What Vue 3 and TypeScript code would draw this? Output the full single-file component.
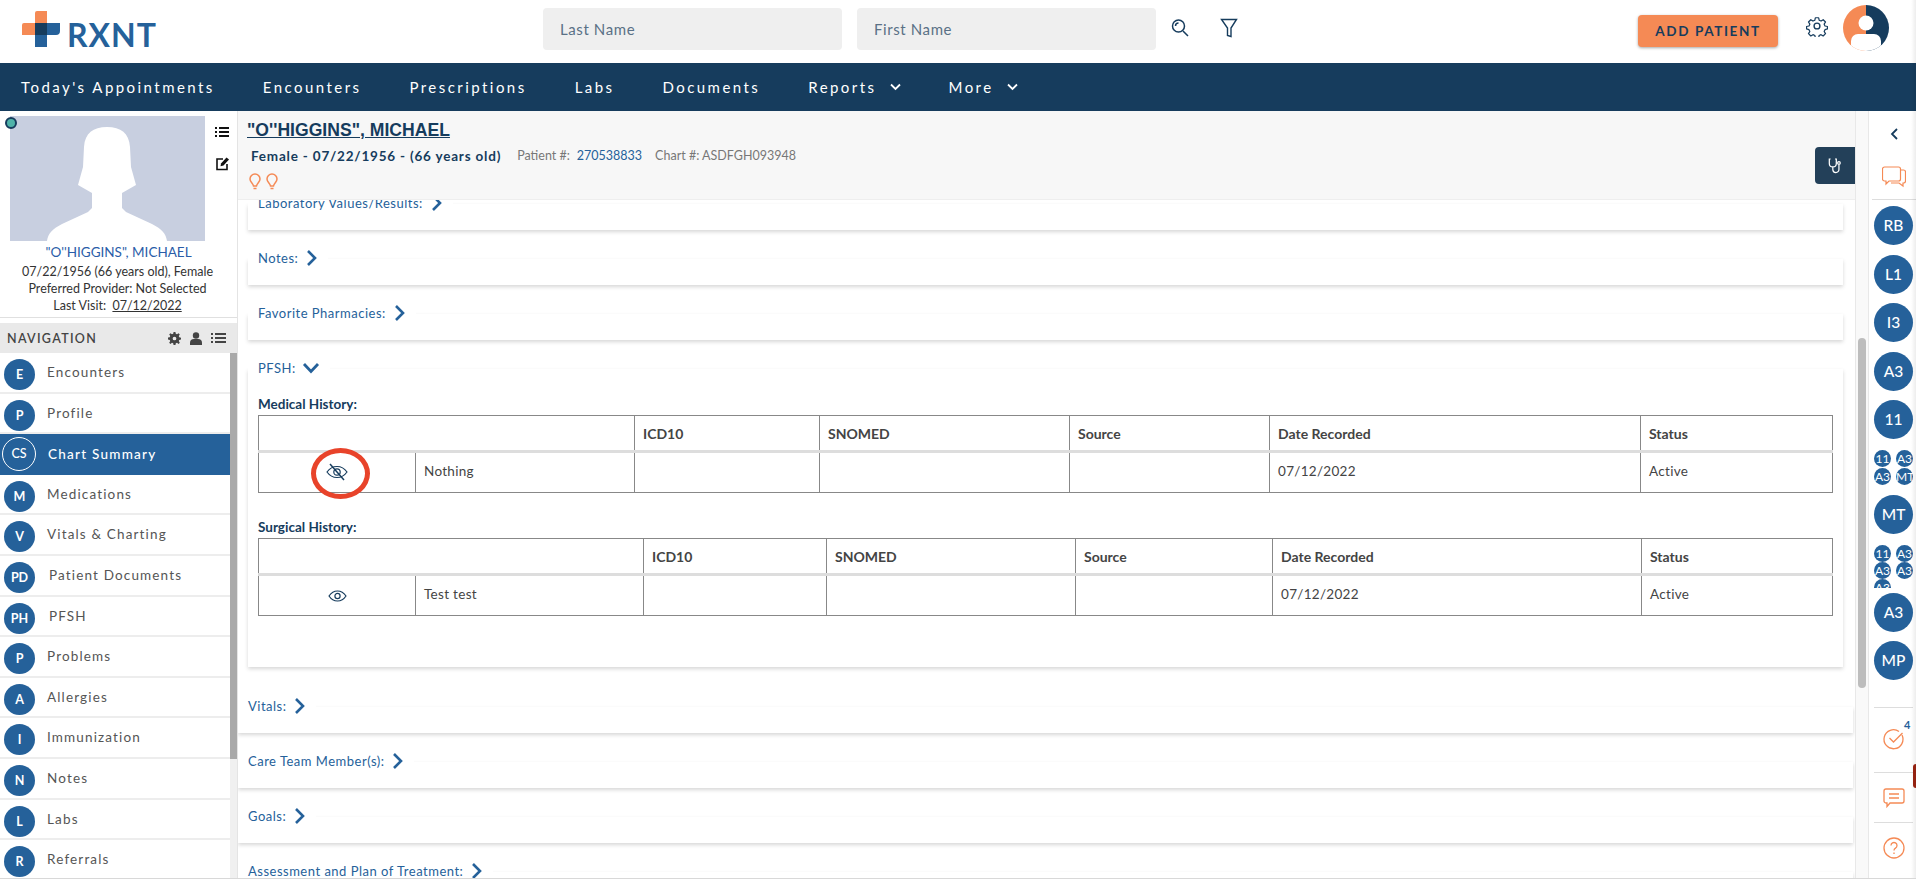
<script setup lang="ts">
const topLinks = [
  { label: "Today's Appointments" },
  { label: "Encounters" },
  { label: "Prescriptions" },
  { label: "Labs" },
  { label: "Documents" },
  { label: "Reports", menu: true },
  { label: "More", menu: true },
];

const navItems = [
  { badge: "E", label: "Encounters" },
  { badge: "P", label: "Profile" },
  { badge: "CS", label: "Chart Summary", active: true },
  { badge: "M", label: "Medications" },
  { badge: "V", label: "Vitals & Charting" },
  { badge: "PD", label: "Patient Documents" },
  { badge: "PH", label: "PFSH" },
  { badge: "P", label: "Problems" },
  { badge: "A", label: "Allergies" },
  { badge: "I", label: "Immunization" },
  { badge: "N", label: "Notes" },
  { badge: "L", label: "Labs" },
  { badge: "R", label: "Referrals" },
];

const headers = ["ICD10", "SNOMED", "Source", "Date Recorded", "Status"];

const histories = [
  {
    title: "Medical History:",
    cols: [157, 219, 185, 250, 200, 371, 192],
    name: "Nothing",
    hidden: true,
  },
  {
    title: "Surgical History:",
    cols: [157, 228, 183, 249, 197, 369, 191],
    name: "Test test",
    hidden: false,
  },
];

const lowerCards = ["Vitals:", "Care Team Member(s):", "Goals:", "Assessment and Plan of Treatment:"];
const clusterA = ["11", "A3", "A3", "MT"];
const clusterB = ["11", "A3", "A3", "A3", "A3"];
</script>

<template>
  <div class="page">
    <header class="topbar">
      <div class="logo">
        <svg class="logo-mark" width="38" height="36" viewBox="0 0 38 36">
          <path d="M13 2a2 2 0 0 1 2-2h10v12h-12zM0 14a2 2 0 0 1 2-2h11v12H0z" fill="#f58a55" />
          <path d="M25 12h13v8a4 4 0 0 1-4 4h-9v12H13V24h12z" fill="#25619a" />
          <rect x="13" y="12" width="12" height="12" fill="#163c5d" />
        </svg>
        <span class="logo-text">RXNT</span>
      </div>
      <div class="search">
        <div class="search-box">Last Name</div>
        <div class="search-box">First Name</div>
        <svg class="search-icon" width="20" height="20" viewBox="0 0 20 20" fill="none" stroke="#163c5d" stroke-width="1.5">
          <circle cx="8.500" cy="8" r="6" />
          <path d="M13 13l5 5M5.500 8a3 3 0 0 1 3-3" />
        </svg>
        <svg class="filter-icon" width="18" height="20" viewBox="0 0 18 20" fill="none" stroke="#163c5d" stroke-width="1.400">
          <path d="M1.500 1.500h15L11 10v8.500l-3.500-1V10z" />
        </svg>
      </div>
      <div class="top-right">
        <button class="add-btn">ADD PATIENT</button>
        <svg class="gear" width="22" height="22" viewBox="0 0 24 24" fill="none" stroke="#163c5d" stroke-width="1.500" stroke-linejoin="round">
          <circle cx="12" cy="12" r="3.200" />
          <path d="M10 2h4l.6 3 2.300 1 2.600-1.600 2.800 2.800-1.600 2.600 1 2.200 3 .6v3l-3 .8-1 2.300 1.600 2.600-2.800 2.800-2.600-1.600-2.300 1-.6 3h-4l-.6-3-2.300-1-2.600 1.600-2.800-2.800 1.600-2.600-1-2.300-3-.8v-3l3-.6 1-2.200-1.600-2.600 2.800-2.800 2.600 1.600 2.300-1z" transform="translate(1.200 1.200) scale(.9)" />
        </svg>
        <svg class="me" width="46" height="46" viewBox="0 0 46 46">
          <clipPath id="me-clip"><circle cx="23" cy="23" r="23" /></clipPath>
          <g clip-path="url(#me-clip)">
            <rect width="23" height="46" fill="#f58a55" />
            <rect x="23" width="23" height="46" fill="#163c5d" />
            <circle cx="23" cy="18" r="7.500" fill="#fff" />
            <path d="M8 46V36a7 7 0 0 1 7-7h16a7 7 0 0 1 7 7v10z" fill="#fff" />
          </g>
        </svg>
      </div>
    </header>

    <nav class="mainnav">
      <a v-for="link in topLinks" :key="link.label" class="mainnav-link">
        {{ link.label }}
        <svg v-if="link.menu" width="11" height="8" viewBox="0 0 11 8" fill="none" stroke="#fff" stroke-width="1.800">
          <path d="M1 1.500l4.500 4.500L10 1.500" />
        </svg>
      </a>
    </nav>

    <div class="body">
      <aside class="sidebar">
        <section class="profile">
          <div class="profile-top">
            <span class="status-dot"></span>
            <svg class="photo" width="195" height="125" viewBox="0 0 195 125">
              <rect width="195" height="125" fill="#c8cfe0" />
              <path d="M97 11c-14 0-22 6-23 20l-1 20-5 18 14 8v15l-4 4-26 12c-10 5-14 10-15 17h120c-1-7-5-12-15-17l-26-12-4-4V77l14-8-5-18-1-20c-1-14-9-20-23-20z" fill="#fff" />
            </svg>
            <div class="profile-tools">
              <svg width="14" height="14" viewBox="0 0 14 14" fill="#111">
                <path d="M0 2h2v2H0zM4 2h10v2H4zM0 6h2v2H0zM4 6h10v2H4zM0 10h2v2H0zM4 10h10v2H4z" />
              </svg>
              <svg width="15" height="15" viewBox="0 0 15 15" fill="none" stroke="#111" stroke-width="1.600">
                <path d="M8 3H2v10.500h10V8" />
                <path d="M6 7.500l5.500-6 2.500 2-5.500 6-3 .8z" fill="#111" stroke="none" />
              </svg>
            </div>
          </div>
          <div class="profile-name">"O''HIGGINS", MICHAEL</div>
          <div class="profile-line">07/22/1956 (66 years old), Female</div>
          <div class="profile-line">Preferred Provider: Not Selected</div>
          <div class="profile-line">Last Visit:&nbsp; <u>07/12/2022</u></div>
        </section>

        <div class="nav-head">
          <span>NAVIGATION</span>
          <div class="nav-head-icons">
            <svg width="13" height="13" viewBox="0 0 14 14" fill="#444">
              <path fill-rule="evenodd" d="M6 0h2l.4 2 1.300.5L11.400 1.400l1.300 1.300-1.100 1.700.5 1.300 2 .4v2l-2 .4-.5 1.300 1.100 1.700-1.300 1.300-1.700-1.100-1.300.5-.4 2H6l-.4-2-1.300-.5-1.700 1.100-1.300-1.300 1.100-1.700-.5-1.300-2-.4V6l2-.4.5-1.300-1.100-1.700 1.300-1.300 1.700 1.100 1.300-.5zM7 5a2 2 0 1 0 0 4 2 2 0 0 0 0-4z" />
            </svg>
            <svg width="12" height="13" viewBox="0 0 12 13" fill="#444">
              <circle cx="6" cy="3.500" r="3.200" />
              <path d="M0 13v-2a4 4 0 0 1 4-4h4a4 4 0 0 1 4 4v2z" />
            </svg>
            <svg width="15" height="12" viewBox="0 0 15 12" fill="#444">
              <path d="M0 1h2v2H0zM4 1h11v2H4zM0 5h2v2H0zM4 5h11v2H4zM0 9h2v2H0zM4 9h11v2H4z" />
            </svg>
          </div>
        </div>

        <div class="nav-wrap">
          <ul class="nav-list">
            <li v-for="item in navItems" :key="item.label + item.badge" class="nav-row" :class="{ active: item.active }">
              <span class="nav-badge">{{ item.badge }}</span>
              <span class="nav-label" :class="{ wide: item.badge.length > 1 && !item.active }">{{ item.label }}</span>
            </li>
          </ul>
          <div class="nav-scroll"><div class="nav-thumb"></div></div>
        </div>
      </aside>

      <main class="main">
        <div class="patient-head">
          <a class="patient-name">"O''HIGGINS", MICHAEL</a>
          <div class="patient-meta">
            <b>Female - 07/22/1956 - (66 years old)</b>
            <span class="meta-key">Patient #:</span>
            <span class="meta-val">270538833</span>
            <span class="meta-key">Chart #: ASDFGH093948</span>
          </div>
          <div class="bulbs">
            <svg v-for="n in 2" :key="n" width="12" height="17" viewBox="0 0 12 17" fill="none" stroke="#f58a55" stroke-width="1.500">
              <path d="M6 1a5 5 0 0 0-5 5c0 3 3 4 3.500 7h3C8 10 11 9 11 6a5 5 0 0 0-5-5zM4.500 15.500h3" />
            </svg>
          </div>
          <div class="steth">
            <svg width="14" height="16" viewBox="0 0 16 18" fill="none" stroke="#fff" stroke-width="1.400">
              <path d="M3 1H1.500v5a4 4 0 0 0 8 0V1H8M5.500 10v3a3.500 3.500 0 0 0 7 0V7" />
              <circle cx="12.500" cy="5.500" r="1.500" />
            </svg>
          </div>
        </div>

        <div class="scroll">
          <div class="card first">
            <div class="legend">Laboratory Values/Results:
              <svg width="14" height="18" viewBox="0 0 14 18" fill="none" stroke="#25619a" stroke-width="2.600"><path d="M4 2l7 7-7 7" /></svg>
            </div>
          </div>
          <div class="card">
            <div class="legend">Notes:
              <svg width="14" height="18" viewBox="0 0 14 18" fill="none" stroke="#25619a" stroke-width="2.600"><path d="M4 2l7 7-7 7" /></svg>
            </div>
          </div>
          <div class="card">
            <div class="legend">Favorite Pharmacies:
              <svg width="14" height="18" viewBox="0 0 14 18" fill="none" stroke="#25619a" stroke-width="2.600"><path d="M4 2l7 7-7 7" /></svg>
            </div>
          </div>

          <div class="card pfsh">
            <div class="legend">PFSH:
              <svg width="18" height="12" viewBox="0 0 18 12" fill="none" stroke="#25619a" stroke-width="2.800"><path d="M2 2l7 7.500L16 2" /></svg>
            </div>
            <div v-for="h in histories" :key="h.title" class="history">
              <h4>{{ h.title }}</h4>
              <table>
                <colgroup>
                  <col v-for="(w, i) in h.cols" :key="i" :style="{ width: w + 'px' }" />
                </colgroup>
                <thead>
                  <tr>
                    <th colspan="2"></th>
                    <th v-for="c in headers" :key="c">{{ c }}</th>
                  </tr>
                </thead>
                <tbody>
                  <tr>
                    <td class="eye-cell">
                      <svg v-if="h.hidden" width="22" height="18" viewBox="0 0 22 18" fill="none" stroke="#163c5d" stroke-width="1.200">
                        <path d="M1 9c2.500-3.500 6-5.500 10-5.500S18.500 5.500 21 9c-2.500 3.500-6 5.500-10 5.500S3.500 12.500 1 9z" />
                        <circle cx="11" cy="9" r="3.200" />
                        <path d="M4 1l14 16" stroke-width="1.500" />
                      </svg>
                      <svg v-else width="19" height="12" viewBox="0 0 19 12" fill="none" stroke="#163c5d" stroke-width="1.200">
                        <path d="M1 6c2-3 5-5 8.500-5S16 3 18 6c-2 3-5 5-8.500 5S3 9 1 6z" />
                        <circle cx="9.500" cy="6" r="2.600" />
                      </svg>
                      <span v-if="h.hidden" class="marker"></span>
                    </td>
                    <td>{{ h.name }}</td>
                    <td></td>
                    <td></td>
                    <td></td>
                    <td>07/12/2022</td>
                    <td>Active</td>
                  </tr>
                </tbody>
              </table>
            </div>
          </div>

          <div v-for="label in lowerCards" :key="label" class="card lower">
            <div class="legend">{{ label }}
              <svg width="14" height="18" viewBox="0 0 14 18" fill="none" stroke="#25619a" stroke-width="2.600"><path d="M4 2l7 7-7 7" /></svg>
            </div>
          </div>
        </div>
      </main>

      <div class="main-scroll"><div class="main-thumb"></div></div>

      <aside class="rail">
        <svg class="rail-back" width="10" height="14" viewBox="0 0 10 14" fill="none" stroke="#163c5d" stroke-width="1.800"><path d="M8 2L3 7l5 5" /></svg>
        <svg class="rail-chat" width="24" height="22" viewBox="0 0 24 22" fill="none" stroke="#f58a55" stroke-width="1.200">
          <path d="M2.500 1h14a2 2 0 0 1 2 2v10a2 2 0 0 1-2 2H7l-3 3v-3H2.500a2 2 0 0 1-2-2V3a2 2 0 0 1 2-2z" />
          <path d="M18.500 4h3a2 2 0 0 1 2 2v9a2 2 0 0 1-2 2H21v3l-4-3H9" />
        </svg>
        <div class="rail-rule"></div>
        <span class="bubble first">RB</span>
        <span class="bubble">L1</span>
        <span class="bubble">I3</span>
        <span class="bubble">A3</span>
        <span class="bubble">11</span>
        <div class="cluster"><span v-for="(c, i) in clusterA" :key="i">{{ c }}</span></div>
        <span class="bubble">MT</span>
        <div class="cluster clipped"><span v-for="(c, i) in clusterB" :key="i">{{ c }}</span></div>
        <span class="bubble after-clip">A3</span>
        <span class="bubble">MP</span>
        <div class="rail-rule low"></div>
        <div class="rail-tool tall">
          <svg width="24" height="24" viewBox="0 0 24 24" fill="none" stroke="#f58a55" stroke-width="1.300">
            <path d="M20 8a9.500 9.500 0 1 1-3-3.500" />
            <path d="M7.500 11l4 4 9-9" />
          </svg>
          <sup>4</sup>
        </div>
        <div class="rail-rule tight"></div>
        <div class="rail-tool">
          <svg width="22" height="20" viewBox="0 0 22 20" fill="none" stroke="#f58a55" stroke-width="1.300">
            <path d="M3 1h16a2 2 0 0 1 2 2v10a2 2 0 0 1-2 2H7l-3 3.500V15H3a2 2 0 0 1-2-2V3a2 2 0 0 1 2-2zM6 6h10M6 10h10" />
          </svg>
        </div>
        <div class="rail-rule tight"></div>
        <div class="rail-tool">
          <svg width="22" height="22" viewBox="0 0 22 22" fill="none" stroke="#f58a55" stroke-width="1.300">
            <circle cx="11" cy="11" r="10" />
            <path d="M8 8.500a3 3 0 1 1 4.500 2.600c-1 .6-1.500 1.200-1.500 2.400M11 15.500v1.500" />
          </svg>
        </div>
        <span class="red-tab"></span>
      </aside>
      <div class="edge-fade"></div>
    </div>
  </div>
</template>

<style>
html,
body {
  background: #fff;
}
</style>

<style scoped>
.page {
  position: relative;
  height: 878px;
  display: flex;
  flex-direction: column;
  overflow: hidden;
  border-bottom: 1px solid #d8d8d8;
  font-family: Lato, "Noto Sans", sans-serif;
  color: #444;
}

.topbar {
  height: 63px;
  display: flex;
  align-items: center;
  flex: none;
  background: #fff;
}

.logo {
  width: 543px;
  padding-left: 22px;
  box-sizing: border-box;
  display: flex;
  align-items: center;
  gap: 7px;
}

.logo-mark {
  margin-top: -5px;
}

.logo-text {
  font-size: 32px;
  font-weight: 700;
  color: #25619a;
  letter-spacing: 1px;
  line-height: 1;
  margin-top: 6px;
}

.search {
  display: flex;
  align-items: center;
  gap: 15px;
  width: 1095px;
  margin-top: -5px;
}

.search-box {
  width: 299px;
  height: 42px;
  line-height: 42px;
  padding-left: 17px;
  box-sizing: border-box;
  background: #efefef;
  border-radius: 4px;
  font-size: 15px;
  letter-spacing: 0.6px;
  color: #5a7186;
}

.search-icon {
  margin-left: -1px;
  margin-top: -2px;
}

.filter-icon {
  margin-left: 15px;
  margin-top: -2px;
}

.top-right {
  display: flex;
  align-items: center;
}

.add-btn {
  width: 140px;
  height: 32px;
  border: none;
  border-radius: 4px;
  background: #f58a55;
  box-shadow: 0 1px 3px rgba(0, 0, 0, 0.35);
  color: #163c5d;
  font-family: inherit;
  font-size: 13.5px;
  font-weight: 700;
  letter-spacing: 1.600px;
  margin-top: -2px;
  padding: 0;
}

.gear {
  margin-left: 28px;
  margin-top: -12px;
}

.me {
  margin-left: 15px;
  margin-top: -7px;
}

.mainnav {
  height: 48px;
  flex: none;
  background: #163c5d;
  display: flex;
  align-items: center;
  gap: 48px;
  padding-left: 21px;
}

.mainnav-link {
  color: #fff;
  font-size: 15px;
  letter-spacing: 2.450px;
  display: flex;
  align-items: center;
  gap: 13px;
}

.body {
  flex: 1;
  min-height: 0;
  display: flex;
}

.sidebar {
  width: 238px;
  flex: none;
  display: flex;
  flex-direction: column;
  border-right: 1px solid #e4e4e4;
  box-sizing: border-box;
}

.profile {
  height: 207px;
  flex: none;
  border-bottom: 1px solid #e0e0e0;
  box-sizing: border-box;
  text-align: center;
  font-size: 12.5px;
  color: #333;
}

.profile-top {
  position: relative;
  display: flex;
  padding: 5px 0 0 10px;
  height: 130px;
  box-sizing: border-box;
}

.status-dot {
  position: absolute;
  left: 5px;
  top: 6px;
  width: 8px;
  height: 8px;
  border-radius: 50%;
  background: #4fb3a9;
  border: 2px solid #163c5d;
}

.profile-tools {
  display: flex;
  flex-direction: column;
  gap: 17px;
  margin: 9px 0 0 10px;
}

.profile-name {
  color: #2a5da8;
  font-size: 13.5px;
  margin-top: 2px;
  line-height: 19px;
}

.profile-line {
  line-height: 17px;
  padding-right: 2px;
}

.profile-name + .profile-line {
  margin-top: 1px;
}

.nav-head {
  margin-top: 5px;
  height: 30px;
  flex: none;
  background: #e9e9e9;
  display: flex;
  align-items: center;
  justify-content: space-between;
  padding: 0 11px 0 7px;
  font-size: 12.5px;
  font-weight: 600;
  letter-spacing: 1.300px;
  color: #444;
}

.nav-head-icons {
  display: flex;
  align-items: center;
  gap: 9px;
}

.nav-wrap {
  flex: 1;
  min-height: 0;
  display: flex;
}

.nav-list {
  flex: 1;
  margin: 0;
  padding: 0;
  list-style: none;
  overflow: hidden;
}

.nav-row {
  height: 40.6px;
  box-sizing: border-box;
  border-bottom: 2px solid #ededed;
  display: flex;
  align-items: flex-start;
  padding-left: 4px;
}

.nav-badge {
  width: 31px;
  height: 31px;
  margin-top: 6px;
  flex: none;
  border-radius: 50%;
  background: #25619a;
  color: #fff;
  font-size: 12.5px;
  font-weight: 700;
  text-align: center;
  line-height: 31px;
}

.nav-label {
  margin: 10px 0 0 12px;
  font-size: 13.5px;
  line-height: 18px;
  letter-spacing: 1.150px;
  color: #555;
}

.nav-label.wide {
  margin-left: 14px;
}

.nav-row.active {
  background: #25619a;
  border-bottom-color: #25619a;
  padding-left: 2px;
}

.nav-row.active .nav-badge {
  width: 32px;
  height: 32px;
  margin-top: 3px;
  line-height: 32px;
  border: 1.500px solid #fff;
  font-weight: 500;
}

.nav-row.active .nav-label {
  color: #fff;
  font-weight: 500;
  margin: 11px 0 0 12px;
  letter-spacing: 1.250px;
}

.nav-scroll {
  width: 7px;
  background: #f0f0f0;
  flex: none;
}

.nav-thumb {
  height: 406px;
  background: #a9a9a9;
}

.main {
  flex: 1;
  min-width: 0;
  display: flex;
  flex-direction: column;
}

.patient-head {
  position: relative;
  height: 89px;
  flex: none;
  background: #f7f7f7;
  border-bottom: 1px solid #eee;
  box-sizing: border-box;
  padding: 9px 0 0 9px;
}

.patient-name {
  font-family: "Liberation Sans", Arial, sans-serif;
  font-size: 17.6px;
  font-weight: 700;
  color: #163c5d;
  text-decoration: underline;
  line-height: 20px;
  display: block;
}

.patient-meta {
  margin: 7px 0 0 4px;
  display: flex;
  align-items: center;
  font-size: 12.5px;
  color: #777;
  line-height: 18px;
}

.patient-meta b {
  font-size: 13.5px;
  color: #163c5d;
  letter-spacing: 0.800px;
  margin-right: 16px;
}

.meta-val {
  color: #25619a;
  margin: 0 13px 0 7px;
}

.bulbs {
  display: flex;
  gap: 5px;
  margin: 8px 0 0 2px;
}

.steth {
  position: absolute;
  right: 0;
  top: 36px;
  width: 40px;
  height: 37px;
  background: #234059;
  border-radius: 4px 0 0 4px;
  display: flex;
  align-items: center;
  justify-content: center;
}

.scroll {
  flex: 1;
  min-height: 0;
  overflow: hidden;
  background: #fff;
}

.card {
  width: 1595px;
  height: 26px;
  margin: 29px 0 0 10px;
  box-sizing: border-box;
  background: #fff;
  box-shadow: 0 2px 4px rgba(0, 0, 0, 0.16);
}

.card.first {
  margin-top: 4px;
}

.legend {
  display: inline-flex;
  align-items: center;
  gap: 2px;
  height: 20px;
  margin-top: -11px;
  padding: 0 10px;
  background: #fff;
  color: #25619a;
  font-size: 13px;
  letter-spacing: 0.500px;
  vertical-align: top;
  position: relative;
  white-space: pre;
}

.pfsh {
  height: 298px;
  padding: 0 11px 0 10px;
}

.pfsh > .legend {
  margin-left: -10px;
}

.history + .history {
  margin-top: 24px;
}

.history h4 {
  margin: 6px 0 0;
  height: 21px;
  line-height: 21px;
  font-size: 13.5px;
  font-weight: 700;
  color: #163c5d;
}

.history + .history h4 {
  margin-top: 0;
}

table {
  table-layout: fixed;
  width: 1574px;
  border-collapse: collapse;
  font-size: 13.5px;
  color: #444;
}

th,
td {
  border: 1px solid #888;
  padding: 0 8px;
  text-align: left;
}

th {
  height: 34px;
  font-size: 14px;
  font-weight: 700;
  border-bottom: 3px solid #ddd;
}

td {
  height: 35px;
  letter-spacing: 0.300px;
  padding-bottom: 4px;
}

.eye-cell {
  position: relative;
  text-align: center;
  padding: 2px 0 0;
}

.marker {
  position: absolute;
  left: 52px;
  top: -5px;
  width: 49px;
  height: 41px;
  border: 5px solid #e8432a;
  border-radius: 50%;
}

.lower {
  width: 1615px;
  margin-left: 0;
}

.pfsh + .lower {
  margin-top: 40px;
}

.main-scroll {
  width: 14px;
  flex: none;
  background: #f9f9f9;
  border-left: 1px solid #e8e8e8;
  border-right: 1px solid #e8e8e8;
  box-sizing: border-box;
  padding: 227px 2px 0 2px;
}

.main-thumb {
  height: 350px;
  border-radius: 4px;
  background: #bdbdbd;
}

.rail {
  position: relative;
  width: 47px;
  flex: none;
  box-sizing: border-box;
  padding-left: 2px;
  display: flex;
  flex-direction: column;
  align-items: center;
  background: #fff;
}

.rail-back {
  margin-top: 16px;
}

.rail-chat {
  margin-top: 25px;
}

.rail-rule {
  width: 44px;
  height: 1px;
  background: #ddd;
  margin-top: 11px;
  flex: none;
}

.bubble {
  width: 39px;
  height: 39px;
  flex: none;
  border-radius: 50%;
  background: #25619a;
  color: #fff;
  font-size: 15.5px;
  font-weight: 500;
  text-align: center;
  line-height: 39px;
  margin-top: 9.500px;
}

.bubble.first {
  margin-top: 6px;
}

.bubble.after-clip {
  margin-top: 5px;
}

.cluster {
  width: 39px;
  margin-top: 11px;
  flex: none;
  display: grid;
  grid-template-columns: 17px 17px;
  justify-content: space-between;
  row-gap: 1px;
  overflow: hidden;
}

.cluster.clipped {
  height: 43px;
  row-gap: 0;
}

.cluster span {
  width: 17px;
  height: 17px;
  border-radius: 50%;
  background: #25619a;
  color: #fff;
  font-size: 12px;
  text-align: center;
  line-height: 17px;
  white-space: nowrap;
}

.rail-rule.low {
  width: 39px;
  margin-top: 27px;
}

.rail-rule.tight {
  width: 39px;
  margin-top: 0;
}

.rail-tool {
  position: relative;
  height: 49px;
  flex: none;
  display: flex;
  align-items: center;
  justify-content: center;
}

.rail-tool.tall {
  height: 61px;
  padding-bottom: 3px;
}

.rail-tool sup {
  position: absolute;
  right: -5px;
  top: 11px;
  font-size: 11px;
  font-weight: 700;
  color: #25619a;
  line-height: 1;
}

.red-tab {
  position: absolute;
  right: 0;
  top: 653px;
  width: 3px;
  height: 24px;
  background: #9c2412;
  border-radius: 3px 0 0 3px;
}

.edge-fade {
  position: absolute;
  right: 0;
  top: 0;
  bottom: 0;
  width: 5px;
  background: linear-gradient(to right, rgba(0, 0, 0, 0), rgba(0, 0, 0, 0.07));
  pointer-events: none;
}
</style>
